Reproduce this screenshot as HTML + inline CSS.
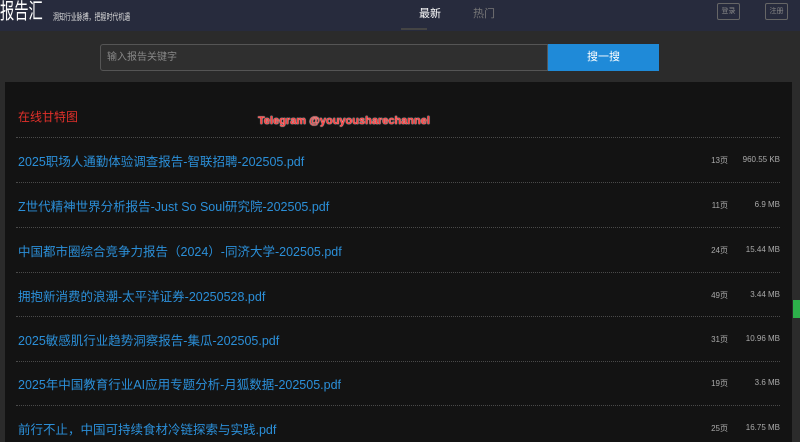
<!DOCTYPE html><html><head><meta charset="utf-8"><style>
*{margin:0;padding:0;box-sizing:border-box}
body{width:800px;height:436px;overflow:hidden;background:#2b2b2b;font-family:"Liberation Sans","Noto Sans CJK SC",sans-serif;position:relative}
.hd{position:absolute;left:0;top:0;width:800px;height:31px;background:#272b3d}
.logo{position:absolute;left:0;top:1px;font-size:15px;color:#fff;line-height:15px;transform:scale(0.95,1.45);transform-origin:0 0;white-space:nowrap}
.slogan{position:absolute;left:53px;top:10px;font-size:9px;color:#ddd;transform:scaleX(0.66);transform-origin:0 0;white-space:nowrap}
.nav1{position:absolute;left:419px;top:5px;font-size:11px;color:#fff}
.nav2{position:absolute;left:473px;top:5px;font-size:11px;color:#777}
.ul{position:absolute;left:401px;top:28px;width:26px;height:2px;background:#444}
.btn{position:absolute;top:3px;width:23px;height:17px;border:1px solid #666;border-radius:2px;color:#888;font-size:7px;text-align:center;line-height:15px}
.inp{position:absolute;left:100px;top:44px;width:448px;height:27px;border:1px solid #555;border-radius:3px 0 0 3px;background:#2f2f2f;color:#888;font-size:10px;line-height:25px;padding-left:6px}
.sb{position:absolute;left:548px;top:44px;width:111px;height:27px;background:#1f8ad8;color:#fff;font-size:11px;text-align:center;line-height:27px}
.panel{position:absolute;left:5px;top:82px;width:787px;height:360px;background:#131313}
.green{position:absolute;left:793px;top:300px;width:7px;height:18px;background:#2db04a}
.red{position:absolute;left:18px;top:108px;font-size:12px;color:#e0302a}
.tg{position:absolute;left:258px;top:115px;font-size:11px;font-weight:bold;color:#ff4040;text-shadow:0 0 1px #fff,0 0 1px #fff}
.sep{position:absolute;left:16px;width:764px;border-top:1px dotted #4a4a4a}
.row{position:absolute;left:18px;font-size:12.5px;color:#2b8fd8}
.pg{position:absolute;left:690px;width:38px;text-align:right;font-size:8px;color:#aaa}
.sz{position:absolute;left:726px;width:54px;text-align:right;font-size:8px;color:#aaa}
</style></head><body>
<div class="hd"></div>
<div class="logo">报告汇</div>
<div class="slogan">洞知行业脉搏，把握时代机遇</div>
<div class="nav1">最新</div><div class="nav2">热门</div><div class="ul"></div>
<div class="btn" style="left:717px">登录</div><div class="btn" style="left:765px">注册</div>
<div class="inp">输入报告关键字</div><div class="sb">搜一搜</div>
<div class="panel"></div>
<div class="green"></div>
<div class="red">在线甘特图</div>
<div class="tg">Telegram @youyousharechannel</div>
<div class="sep" style="top:137px"></div>
<div class="row" style="top:151px">2025职场人通勤体验调查报告-智联招聘-202505.pdf</div><div class="pg" style="top:155px">13页</div><div class="sz" style="top:155px">960.55 KB</div>
<div class="sep" style="top:182px"></div>
<div class="row" style="top:196px">Z世代精神世界分析报告-Just So Soul研究院-202505.pdf</div><div class="pg" style="top:200px">11页</div><div class="sz" style="top:200px">6.9 MB</div>
<div class="sep" style="top:227px"></div>
<div class="row" style="top:241px">中国都市圈综合竞争力报告（2024）-同济大学-202505.pdf</div><div class="pg" style="top:245px">24页</div><div class="sz" style="top:245px">15.44 MB</div>
<div class="sep" style="top:272px"></div>
<div class="row" style="top:286px">拥抱新消费的浪潮-太平洋证券-20250528.pdf</div><div class="pg" style="top:290px">49页</div><div class="sz" style="top:290px">3.44 MB</div>
<div class="sep" style="top:316px"></div>
<div class="row" style="top:330px">2025敏感肌行业趋势洞察报告-集瓜-202505.pdf</div><div class="pg" style="top:334px">31页</div><div class="sz" style="top:334px">10.96 MB</div>
<div class="sep" style="top:361px"></div>
<div class="row" style="top:374px">2025年中国教育行业AI应用专题分析-月狐数据-202505.pdf</div><div class="pg" style="top:378px">19页</div><div class="sz" style="top:378px">3.6 MB</div>
<div class="sep" style="top:405px"></div>
<div class="row" style="top:419px">前行不止，中国可持续食材冷链探索与实践.pdf</div><div class="pg" style="top:423px">25页</div><div class="sz" style="top:423px">16.75 MB</div>
</body></html>
